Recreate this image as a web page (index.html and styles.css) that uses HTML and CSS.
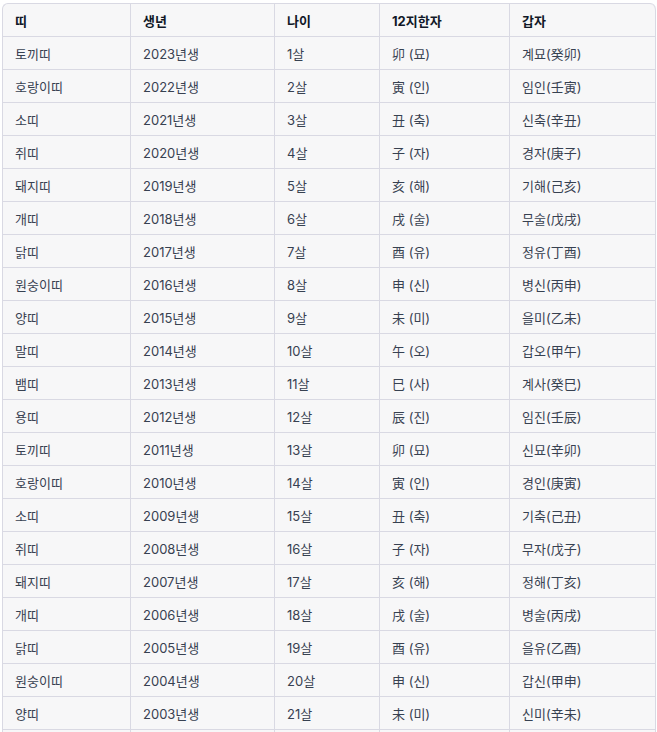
FILE: index.html
```html
<!DOCTYPE html>
<html lang="ko">
<head>
<meta charset="utf-8">
<link rel="stylesheet" href="styles.css">
</head>
<body>
<div class="wrap">
<table class="zodiac">
<colgroup>
<col class="c1"><col class="c2"><col class="c3"><col class="c4"><col class="c5">
</colgroup>
<thead>
<tr><th>띠</th><th>생년</th><th>나이</th><th>12지한자</th><th>갑자</th></tr>
</thead>
<tbody>
<tr><td>토끼띠</td><td>2023년생</td><td>1살</td><td>卯 (묘)</td><td>계묘(癸卯)</td></tr>
<tr><td>호랑이띠</td><td>2022년생</td><td>2살</td><td>寅 (인)</td><td>임인(壬寅)</td></tr>
<tr><td>소띠</td><td>2021년생</td><td>3살</td><td>丑 (축)</td><td>신축(辛丑)</td></tr>
<tr><td>쥐띠</td><td>2020년생</td><td>4살</td><td>子 (자)</td><td>경자(庚子)</td></tr>
<tr><td>돼지띠</td><td>2019년생</td><td>5살</td><td>亥 (해)</td><td>기해(己亥)</td></tr>
<tr><td>개띠</td><td>2018년생</td><td>6살</td><td>戌 (술)</td><td>무술(戊戌)</td></tr>
<tr><td>닭띠</td><td>2017년생</td><td>7살</td><td>酉 (유)</td><td>정유(丁酉)</td></tr>
<tr><td>원숭이띠</td><td>2016년생</td><td>8살</td><td>申 (신)</td><td>병신(丙申)</td></tr>
<tr><td>양띠</td><td>2015년생</td><td>9살</td><td>未 (미)</td><td>을미(乙未)</td></tr>
<tr><td>말띠</td><td>2014년생</td><td>10살</td><td>午 (오)</td><td>갑오(甲午)</td></tr>
<tr><td>뱀띠</td><td>2013년생</td><td>11살</td><td>巳 (사)</td><td>계사(癸巳)</td></tr>
<tr><td>용띠</td><td>2012년생</td><td>12살</td><td>辰 (진)</td><td>임진(壬辰)</td></tr>
<tr><td>토끼띠</td><td>2011년생</td><td>13살</td><td>卯 (묘)</td><td>신묘(辛卯)</td></tr>
<tr><td>호랑이띠</td><td>2010년생</td><td>14살</td><td>寅 (인)</td><td>경인(庚寅)</td></tr>
<tr><td>소띠</td><td>2009년생</td><td>15살</td><td>丑 (축)</td><td>기축(己丑)</td></tr>
<tr><td>쥐띠</td><td>2008년생</td><td>16살</td><td>子 (자)</td><td>무자(戊子)</td></tr>
<tr><td>돼지띠</td><td>2007년생</td><td>17살</td><td>亥 (해)</td><td>정해(丁亥)</td></tr>
<tr><td>개띠</td><td>2006년생</td><td>18살</td><td>戌 (술)</td><td>병술(丙戌)</td></tr>
<tr><td>닭띠</td><td>2005년생</td><td>19살</td><td>酉 (유)</td><td>을유(乙酉)</td></tr>
<tr><td>원숭이띠</td><td>2004년생</td><td>20살</td><td>申 (신)</td><td>갑신(甲申)</td></tr>
<tr><td>양띠</td><td>2003년생</td><td>21살</td><td>未 (미)</td><td>신미(辛未)</td></tr>
<tr><td></td><td></td><td></td><td></td><td></td></tr>
</tbody>
</table>
</div>
</body>
</html>
```
FILE: styles.css
```css
html, body {
  margin: 0;
  padding: 0;
  background: #ffffff;
  overflow: hidden;
}
.wrap {
  padding: 3px 0 0 2px;
}
.zodiac {
  border-collapse: separate;
  border-spacing: 0;
  table-layout: fixed;
  width: 653px;
  background: #f7f7f8;
  border-top: 1px solid #d9d9e3;
  border-left: 1px solid #d9d9e3;
  border-radius: 6px 6px 0 0;
  font-family: Inter, "Noto Sans CJK KR", sans-serif;
  font-size: 13px;
  color: #374151;
}
.c1 { width: 128px; }
.c2 { width: 144px; }
.c3 { width: 105px; }
.c4 { width: 130px; }
.c5 { width: 146px; }
.zodiac th,
.zodiac td {
  padding: 0 12px;
  text-align: left;
  border-right: 1px solid #d9d9e3;
  border-bottom: 1px solid #d9d9e3;
  box-sizing: border-box;
  height: 33px;
  white-space: nowrap;
  vertical-align: middle;
}
.zodiac th {
  font-weight: 700;
  color: #111827;
}
.zodiac th:last-child { border-top-right-radius: 6px; }
.zodiac th:first-child { border-top-left-radius: 6px; }
```
